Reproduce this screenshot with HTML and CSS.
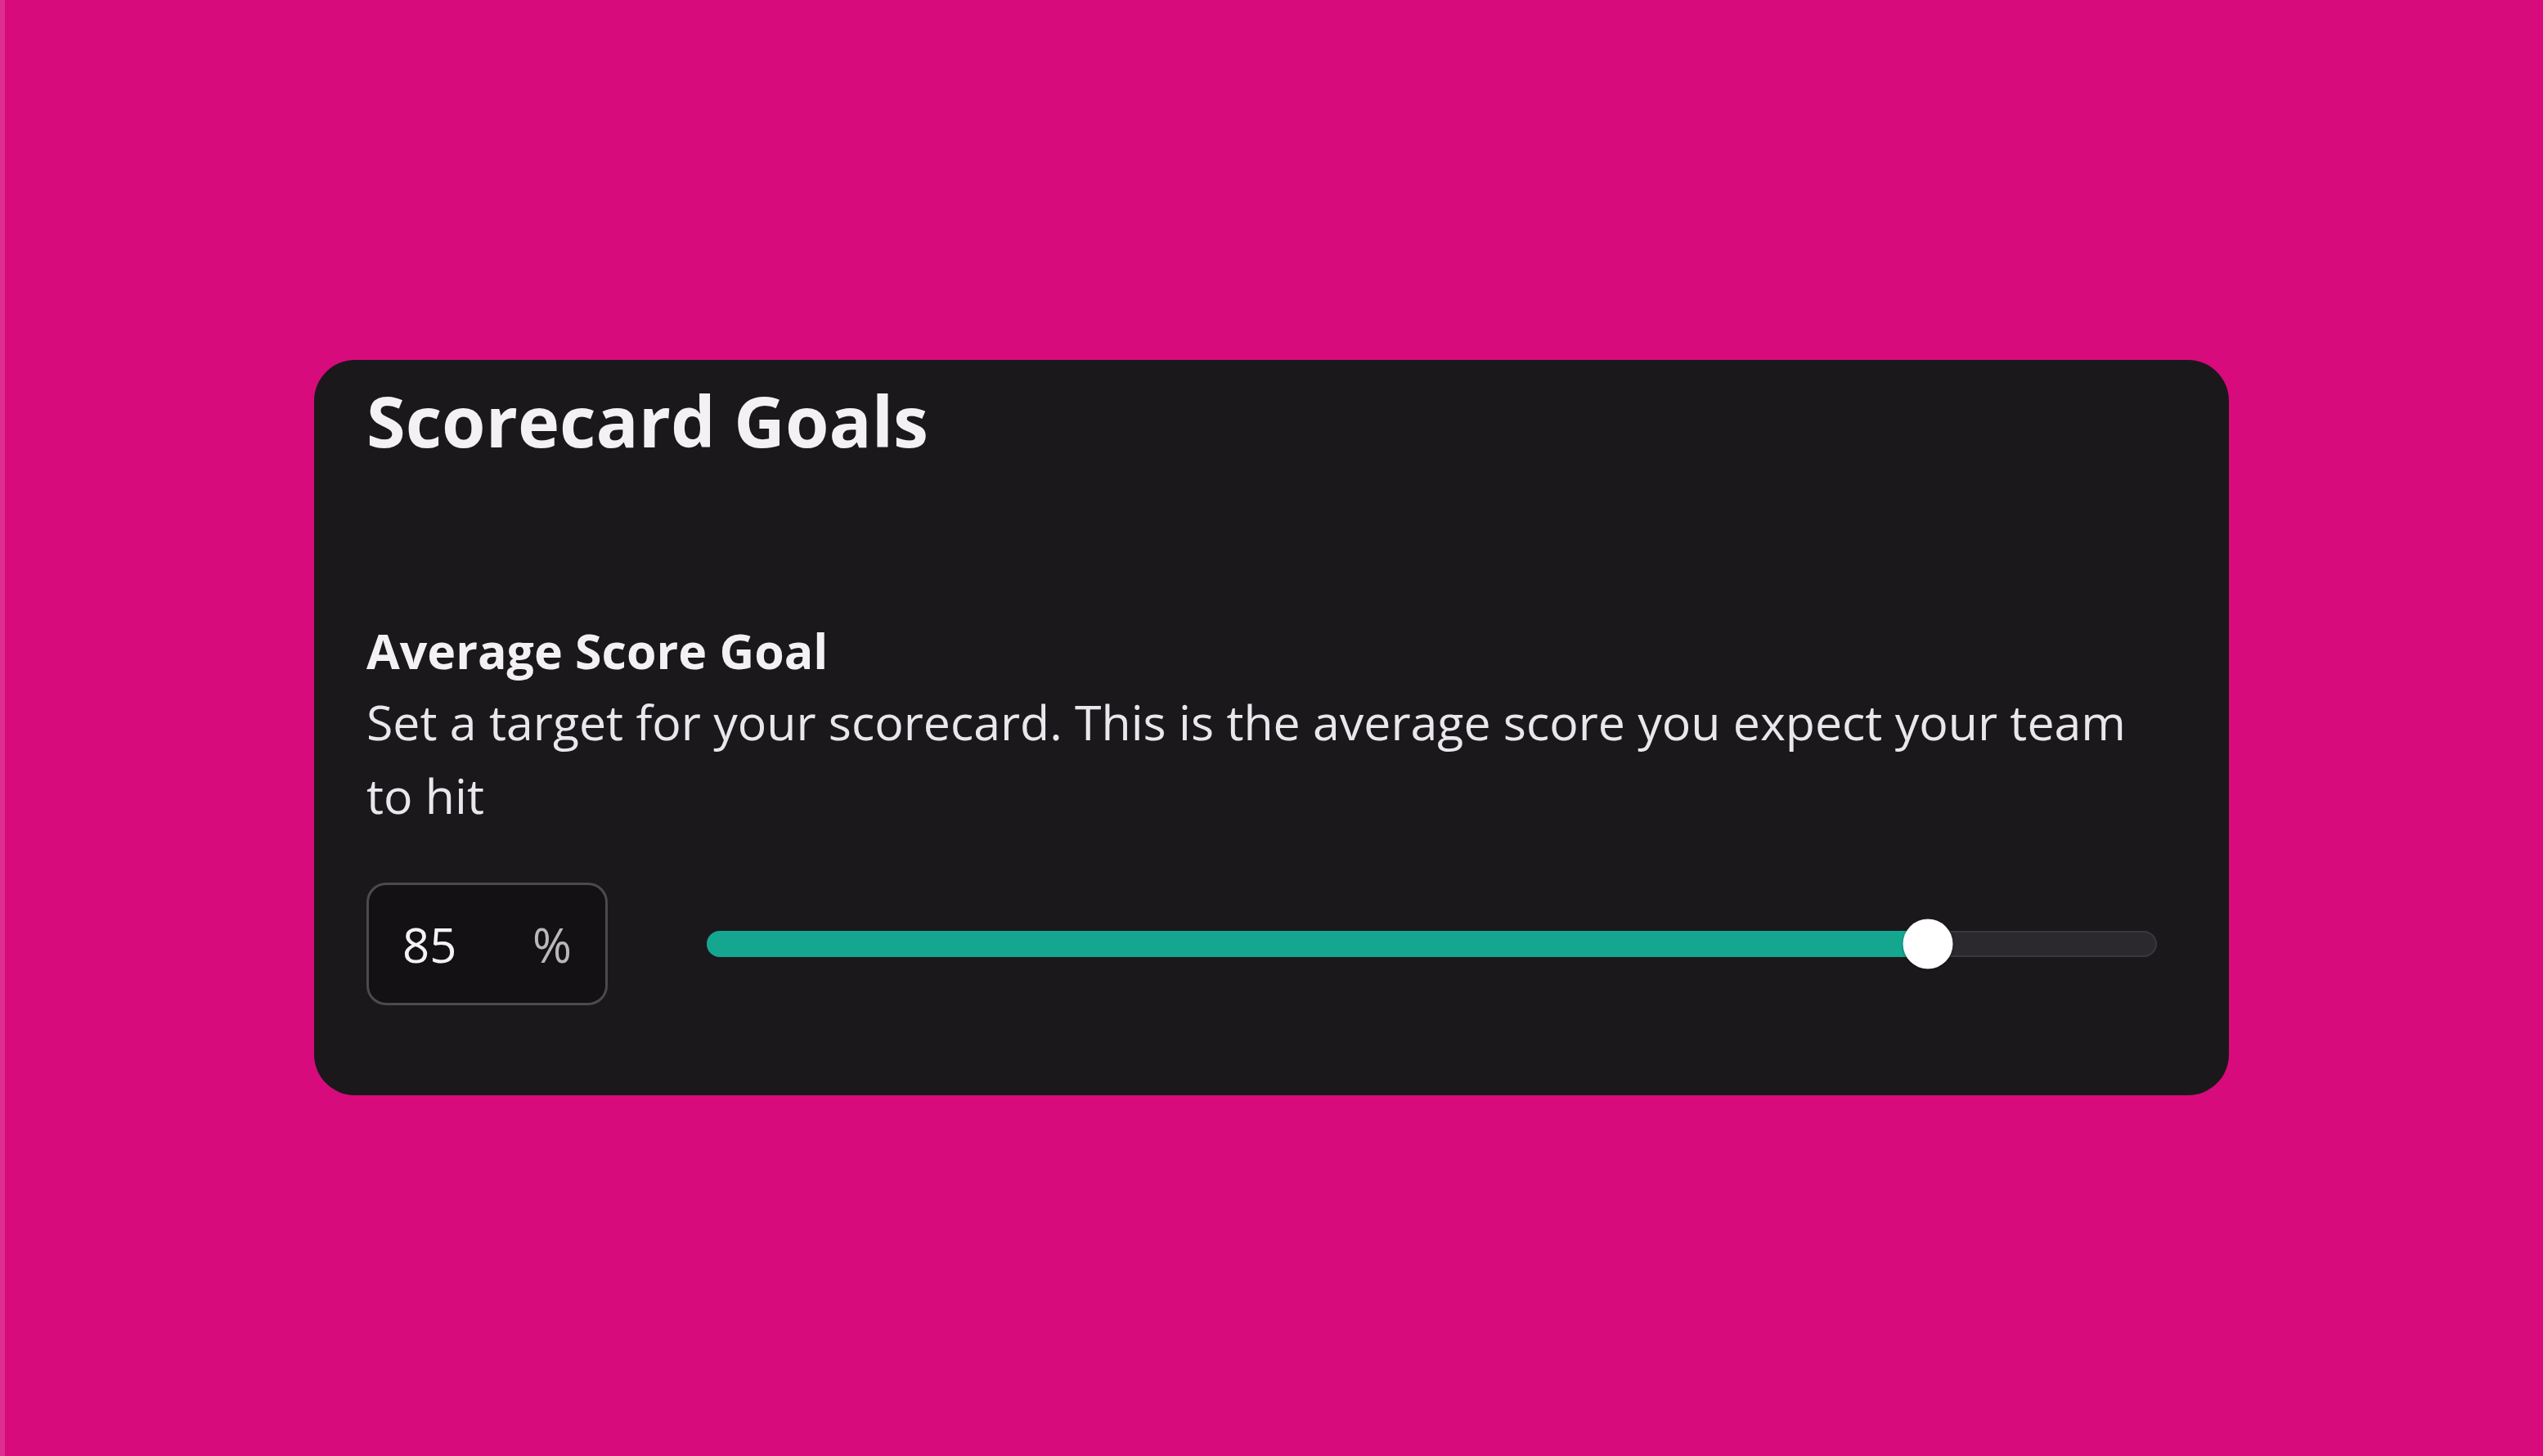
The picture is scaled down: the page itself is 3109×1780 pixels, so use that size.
FILE: index.html
```html
<!DOCTYPE html>
<html lang="en">
<head>
<meta charset="utf-8">
<title>Scorecard Goals</title>
<link rel="stylesheet" href="styles.css">
</head>
<body>
<main class="page">
  <section class="card">
    <h1 class="card-title">Scorecard Goals</h1>
    <div class="goal">
      <h2 class="goal-label">Average Score Goal</h2>
      <p class="goal-desc">Set a target for your scorecard. This is the average score you expect your team to hit</p>
      <div class="goal-controls">
        <div class="pct-input">
          <span class="pct-value">85</span>
          <span class="pct-unit">%</span>
        </div>
        <div class="slider">
          <div class="slider-track">
            <div class="slider-fill" style="width: 84.3%"></div>
            <div class="slider-thumb" style="left: 84.3%"></div>
          </div>
        </div>
      </div>
    </div>
  </section>
</main>
</body>
</html>
```
FILE: styles.css
```css
* { box-sizing: border-box; }
html, body { margin: 0; padding: 0; }
body {
  background: #d70b7c;
  width: 3109px;
  height: 1780px;
  overflow: hidden;
  font-family: "Open Sans", "Noto Sans", sans-serif;
  border-left: 6px solid #de2f90;
}
.page {
  padding: 440px 0 0 378px;
}
.card {
  width: 2341px;
  height: 899px;
  background: #1b181c;
  border-radius: 50px;
  padding: 19px 88px 110px 64px;
  color: #f1eff2;
}
.card-title {
  margin: 0;
  font-size: 86.5px;
  line-height: 110px;
  font-weight: 700;
  color: #f3f1f4;
}
.goal {
  margin-top: 184px;
}
.goal-label {
  margin: 0;
  font-size: 59px;
  line-height: 84px;
  font-weight: 700;
  color: #f3f1f4;
}
.goal-desc {
  margin: 0;
  max-width: 2186px;
  font-size: 59px;
  line-height: 90px;
  font-weight: 400;
  color: #e9e7eb;
}
.goal-controls {
  margin-top: 62px;
  display: flex;
  align-items: center;
}
.pct-input {
  width: 295px;
  height: 150px;
  border: 3px solid #4d4a4f;
  border-radius: 24px;
  background: #131114;
  display: flex;
  align-items: center;
  justify-content: space-between;
  padding: 0 41px 0 41px;
  font-size: 58px;
}
.pct-value { color: #f4f2f5; }
.pct-unit { color: #bab7bb; }
.slider {
  flex: 1;
  margin-left: 121px;
}
.slider-track {
  position: relative;
  height: 32px;
  border-radius: 16px;
  background: #2c292e;
  border: 2px solid #3b383d;
}
.slider-fill {
  position: absolute;
  left: -2px;
  top: -2px;
  bottom: -2px;
  background: #15a690;
  border-radius: 16px 0 0 16px;
}
.slider-thumb {
  position: absolute;
  top: 50%;
  width: 61px;
  height: 61px;
  border-radius: 50%;
  background: #ffffff;
  transform: translate(-50%, -50%);
  box-shadow: 0 1px 3px rgba(0,0,0,0.4);
}
```
